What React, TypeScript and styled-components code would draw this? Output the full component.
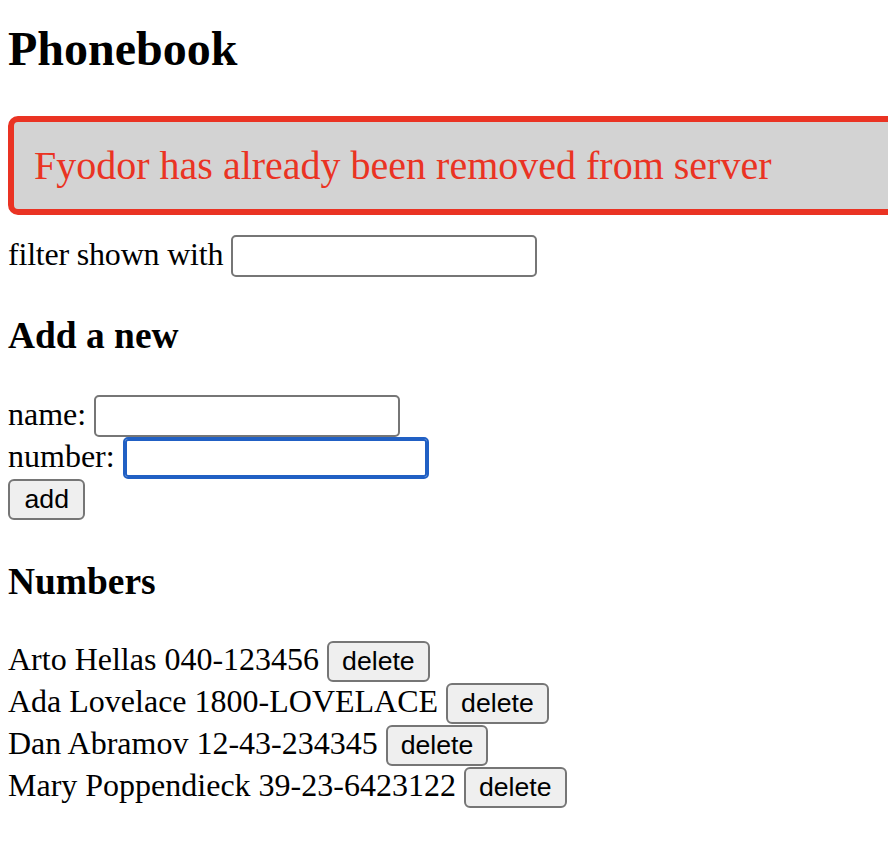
import React from "react";
import styled, { createGlobalStyle } from "styled-components";

const GlobalStyle = createGlobalStyle`
  html, body {
    margin: 0;
    padding: 0;
    background: #ffffff;
    overflow: hidden;
  }
  body {
    font-family: "Liberation Serif", "Times New Roman", serif;
    font-size: 32px;
    color: #000000;
  }
`;

const Page = styled.div`
  width: 940px;
  padding-left: 8px;
  box-sizing: border-box;
`;

const Title = styled.h2`
  font-size: 48px;
  font-weight: bold;
  margin: 21px 0 40px;
`;

const SectionTitle = styled.h3<{ $top?: number }>`
  font-size: 37.44px;
  font-weight: bold;
  margin: ${(p) => p.$top ?? 37.44}px 0 37.44px;
`;

const Notification = styled.div`
  color: #ea3323;
  background: #d3d3d3;
  font-size: 40px;
  border: 6px solid #ea3323;
  border-radius: 10px;
  padding: 20px;
  margin-bottom: 20px;
`;

const Line = styled.div``;

const Label = styled.span<{ $tight?: boolean }>`
  letter-spacing: ${(p) => (p.$tight ? "-0.2px" : "0")};
`;

const TextInput = styled.input<{ $focused?: boolean }>`
  box-sizing: border-box;
  width: 306px;
  height: 42px;
  margin: 0;
  padding: 2px 4px;
  font-family: "Liberation Sans", Arial, sans-serif;
  font-size: 26.67px;
  background: #ffffff;
  border: 2px solid ${(p) => (p.$focused ? "#2160c4" : "#767676")};
  border-radius: 5px;
  box-shadow: ${(p) => (p.$focused ? "inset 0 0 0 2px #2160c4" : "none")};
  outline: none;
`;

const Button = styled.button<{ $spaced?: boolean; $pad?: number }>`
  box-sizing: border-box;
  height: 41px;
  margin: ${(p) => (p.$spaced ? "1px 0 0" : "0")};
  padding: 0 ${(p) => p.$pad ?? 13}px;
  font-family: "Liberation Sans", Arial, sans-serif;
  font-size: 26.67px;
  color: #000000;
  background: #efefef;
  border: 2px solid #767676;
  border-radius: 6px;
`;

const persons = [
  { name: "Arto Hellas", number: "040-123456" },
  { name: "Ada Lovelace", number: "1800-LOVELACE" },
  { name: "Dan Abramov", number: "12-43-234345" },
  { name: "Mary Poppendieck", number: "39-23-6423122" },
];

export default function App() {
  return (
    <>
      <GlobalStyle />
      <Page>
        <Title>Phonebook</Title>
        <Notification>Fyodor has already been removed from server</Notification>
        <Line>
          <Label $tight>filter shown with</Label> <TextInput />
        </Line>
        <SectionTitle>Add a new</SectionTitle>
        <form onSubmit={(e) => e.preventDefault()}>
          <Line>
            name: <TextInput />
          </Line>
          <Line>
            number: <TextInput $focused />
          </Line>
          <Line>
            <Button type="submit" $pad={14.5}>add</Button>
          </Line>
        </form>
        <SectionTitle $top={40}>Numbers</SectionTitle>
        {persons.map((p) => (
          <Line key={p.name}>
            {p.name} {p.number} <Button $spaced>delete</Button>
          </Line>
        ))}
      </Page>
    </>
  );
}
